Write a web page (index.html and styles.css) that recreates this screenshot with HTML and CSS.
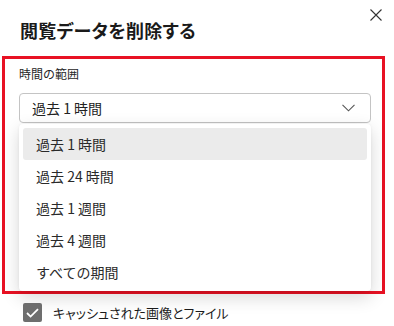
FILE: index.html
```html
<!DOCTYPE html>
<html lang="ja">
<head>
    <meta charset="UTF-8">
    <meta name="viewport" content="width=device-width, initial-scale=1.0">
    <title>閲覧データを削除する</title>
    <link rel="stylesheet" href="styles.css">
</head>
<body>
    <div class="panel">
        <header class="panel-head">
            <h1 class="title">閲覧データを削除する</h1>
            <button class="close" aria-label="閉じる">
                <svg width="12" height="12" viewBox="0 0 12 12">
                    <path d="M0.5 0.5 L11.5 11.5 M11.5 0.5 L0.5 11.5" stroke="#333" stroke-width="1.1" fill="none"/>
                </svg>
            </button>
        </header>

        <!-- 赤枠で囲まれた時間の範囲 -->
        <div class="marked">
            <div class="field-label">時間の範囲</div>
            <div class="select">
                <span>過去 1 時間</span>
                <svg width="13" height="8" viewBox="0 0 13 8">
                    <path d="M0.5 0.8 L6.5 6.8 L12.5 0.8" stroke="#555" stroke-width="1.1" fill="none"/>
                </svg>
            </div>
            <ul class="menu">
                <li class="menu-item active">過去 1 時間</li>
                <li class="menu-item">過去 24 時間</li>
                <li class="menu-item">過去 1 週間</li>
                <li class="menu-item">過去 4 週間</li>
                <li class="menu-item">すべての期間</li>
            </ul>
        </div>

        <label class="check">
            <span class="box">
                <svg width="13" height="10" viewBox="0 0 13 10">
                    <path d="M1 5 L4.6 8.6 L12 1.2" stroke="#fff" stroke-width="1.8" fill="none"/>
                </svg>
            </span>
            <span class="check-text">キャッシュされた画像とファイル</span>
        </label>
    </div>
</body>
</html>
```

FILE: styles.css
```css
body {
    margin: 0;
    background: #fff;
    font-family: "Noto Sans CJK JP", "Noto Sans", sans-serif;
    color: #1b1b1b;
}

.panel {
    width: 394px;
    height: 326px;
    overflow: hidden;
}

.panel-head {
    display: flex;
    justify-content: space-between;
    align-items: flex-start;
    padding: 9px 12px 0 20px;
}

.title {
    margin: 9px 0 0;
    font-size: 18px;
    line-height: 24px;
    font-weight: 600;
    font-feature-settings: "palt";
    letter-spacing: 0.3px;
    color: #1a1a1a;
}

.close {
    width: 12px;
    height: 12px;
    padding: 0;
    border: none;
    background: none;
    display: flex;
}

.marked {
    margin: 14px 0 0 2px;
    width: 383px;
    box-sizing: border-box;
    border: 3px solid #e81123;
    padding: 7px 11px 0 14px;
}

.field-label {
    font-size: 12px;
    line-height: 16px;
    color: #262626;
}

.select {
    margin-top: 11px;
    height: 30px;
    box-sizing: border-box;
    border: 1px solid #c4c4c4;
    border-radius: 4px;
    display: flex;
    justify-content: space-between;
    align-items: center;
    padding: 0 15px 0 12px;
    font-size: 14px;
    color: #222;
}

.menu {
    list-style: none;
    margin: 1px 0 0;
    padding: 4px 4px 3px;
    background: #fff;
    border-radius: 4px;
    box-shadow: 0 6px 18px rgba(0, 0, 0, 0.16), 0 0 3px rgba(0, 0, 0, 0.06);
}

.menu-item {
    height: 32px;
    line-height: 32px;
    padding-left: 13px;
    font-size: 14px;
    color: #2a2a2a;
    border-radius: 3px;
}

.menu-item.active {
    background: #ebebeb;
}

.check {
    display: flex;
    align-items: center;
    margin-top: 9px;
    padding-left: 23px;
}

.box {
    width: 19px;
    height: 19px;
    border-radius: 2px;
    background: #6e6e6e;
    display: flex;
    justify-content: center;
    align-items: center;
}

.check-text {
    margin-left: 11px;
    font-size: 13px;
    font-feature-settings: "palt";
    color: #1b1b1b;
}
```
